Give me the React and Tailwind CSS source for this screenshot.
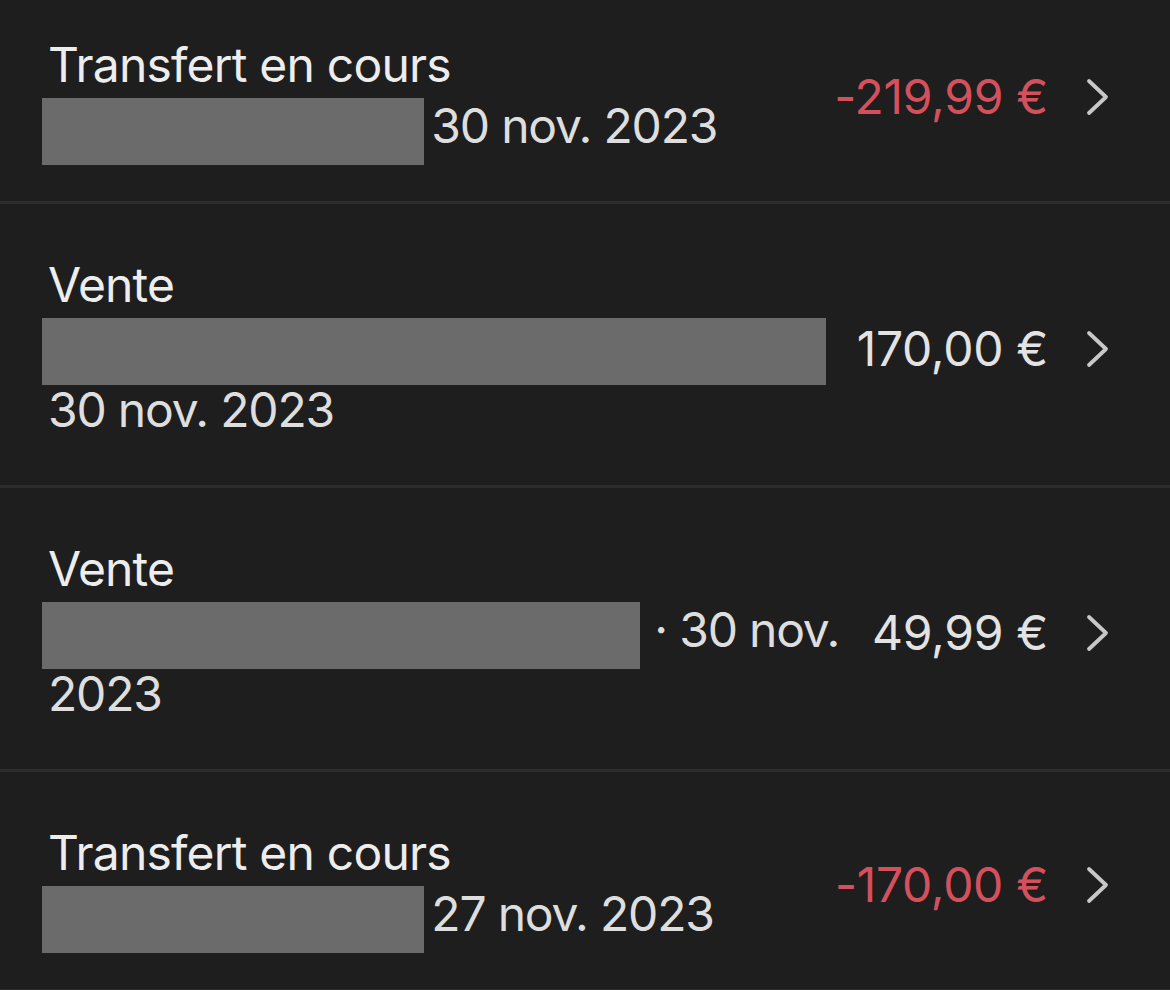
const rows = [
  { title: "Transfert en cours", box: 382, sep: false, date: "30 nov. 2023", amount: "-219,99 €", negative: true },
  { title: "Vente", box: 784, sep: false, date: "30 nov. 2023", amount: "170,00 €", negative: false },
  { title: "Vente", box: 598, sep: true, date: "30 nov. 2023", amount: "49,99 €", negative: false },
  { title: "Transfert en cours", box: 382, sep: false, date: "27 nov. 2023", amount: "-170,00 €", negative: true },
];

function Chevron() {
  return (
    <svg width="24" height="40" viewBox="0 0 24 40" className="shrink-0">
      <path d="M3 4 L20 20 L3 36" fill="none" stroke="#c8c8c8" strokeWidth="3.8" strokeLinecap="round" strokeLinejoin="round" />
    </svg>
  );
}

function Row({ row, first }) {
  return (
    <div
      className={`flex items-center border-b-[3px] border-[#2c2c2c] pl-[48px] pr-[60px] pt-[52px] pb-[43px] ${first ? "-mt-[16px]" : ""}`}
    >
      <div className="min-w-0 flex-1">
        <p className="text-[48px] leading-[58px] tracking-[-0.8px] text-[#ededed]">{row.title}</p>
        <p className="text-[48px] leading-[64px] tracking-[-1.2px] text-[#dedede]">
          <span
            className={`-ml-[6px] -mb-[22px] inline-block h-[67px] bg-[#6b6b6b] align-baseline ${row.sep ? "mr-[2px]" : "-mr-[5px]"}`}
            style={{ width: row.box }}
          />
          {row.sep ? " · " : " "}
          {row.date}
        </p>
      </div>
      <span
        className={`ml-[20px] shrink-0 text-[48px] tracking-[-0.3px] ${row.negative ? "text-[#d5505d]" : "text-[#e3e3e3]"}`}
      >
        {row.amount}
      </span>
      <div className="ml-[38px]">
        <Chevron />
      </div>
    </div>
  );
}

export default function App() {
  return (
    <div
      className="h-[990px] w-[1170px] overflow-hidden bg-[#1e1e1e]"
      style={{ fontFamily: "Inter, 'Noto Sans', sans-serif" }}
    >
      {rows.map((row, i) => (
        <Row key={i} row={row} first={i === 0} />
      ))}
    </div>
  );
}
